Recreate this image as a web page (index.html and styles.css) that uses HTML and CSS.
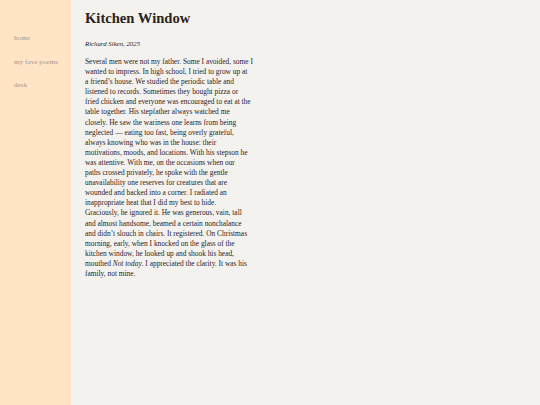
FILE: index.html
```html
<!DOCTYPE html>
<html>
<head>
<meta charset="utf-8">
<link rel="stylesheet" href="styles.css">
</head>
<body>
<div class="layout">
  <nav class="sidebar">
    <a class="nav-link" href="#">home</a>
    <a class="nav-link" href="#">my fave poems</a>
    <a class="nav-link" href="#">desk</a>
  </nav>
  <main class="content">
    <h1 class="title">Kitchen Window</h1>
    <p class="byline">Richard Siken, 2025</p>
    <p class="poem">Several men were not my father. Some I avoided, some I<br>
wanted to impress. In high school, I tried to grow up at<br>
a friend’s house. We studied the periodic table and<br>
listened to records. Sometimes they bought pizza or<br>
fried chicken and everyone was encouraged to eat at the<br>
table together. His stepfather always watched me<br>
closely. He saw the wariness one learns from being<br>
neglected — eating too fast, being overly grateful,<br>
always knowing who was in the house: their<br>
motivations, moods, and locations. With his stepson he<br>
was attentive. With me, on the occasions when our<br>
paths crossed privately, he spoke with the gentle<br>
unavailability one reserves for creatures that are<br>
wounded and backed into a corner. I radiated an<br>
inappropriate heat that I did my best to hide.<br>
Graciously, he ignored it. He was generous, vain, tall<br>
and almost handsome, beamed a certain nonchalance<br>
and didn’t slouch in chairs. It registered. On Christmas<br>
morning, early, when I knocked on the glass of the<br>
kitchen window, he looked up and shook his head,<br>
mouthed <em>Not today</em>. I appreciated the clarity. It was his<br>
family, not mine.</p>
  </main>
</div>
</body>
</html>
```
FILE: styles.css
```css
html, body {
  margin: 0;
  padding: 0;
  height: 100%;
}
body {
  font-family: "Liberation Serif", "DejaVu Serif", serif;
  background: #f4f2ee;
  color: #2e2723;
}
.layout {
  display: flex;
  min-height: 100vh;
}
.sidebar {
  width: 71px;
  flex-shrink: 0;
  background: #ffe4c6;
  display: flex;
  flex-direction: column;
  gap: 13.5px;
  padding: 33px 0 0 14px;
  box-sizing: border-box;
}
.nav-link {
  font-size: 7px;
  line-height: 10px;
  color: #a8968a;
  text-decoration: none;
  letter-spacing: 0.1px;
}
.content {
  padding: 9px 0 0 14px;
  width: 200px;
}
.title {
  margin: 0;
  font-size: 14.6px;
  line-height: 18px;
  font-weight: bold;
  color: #2b2420;
}
.byline {
  margin: 12px 0 0 0;
  font-size: 6.8px;
  line-height: 10px;
  font-style: italic;
  color: #2b2420;
}
.poem {
  margin: 8px 0 0 0;
  font-size: 7.4px;
  line-height: 10.1px;
  white-space: nowrap;
  color: #2a231f;
}
```
